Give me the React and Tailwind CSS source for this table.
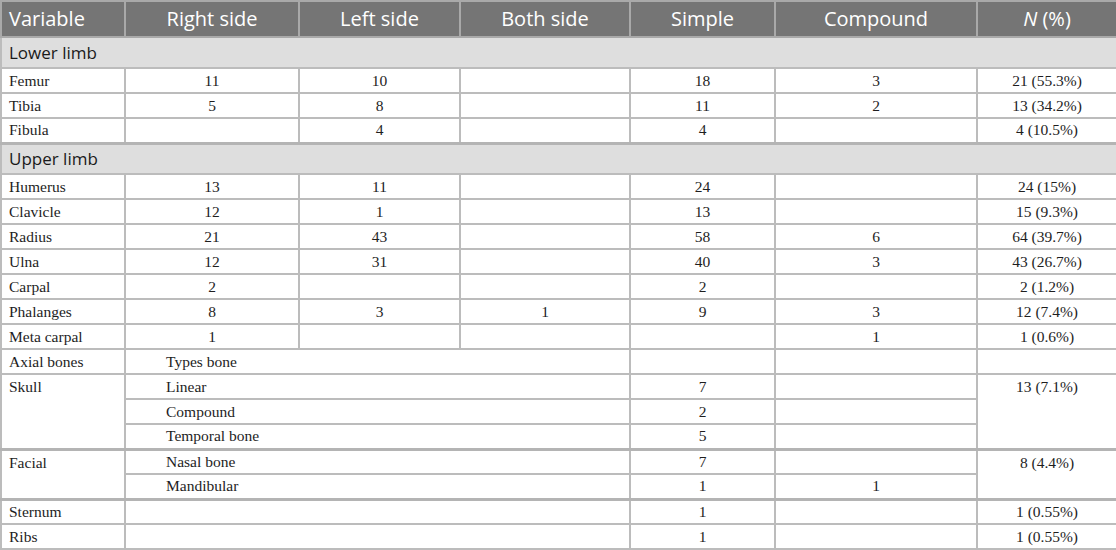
import React from "react";

const B = "border-2 border-[#bcbcbc]";
const td = `${B} h-[25px] p-0 text-center align-middle`;
const tdL = `${B} h-[25px] p-0 pl-[7px] text-left align-middle`;
const tdSpan = `${B} h-[25px] p-0 pl-[40px] text-left align-middle`;

function Row({ name, vals, topThick }) {
  return (
    <tr className={topThick ? "border-t-[3px] border-t-[#b4b4b4]" : ""}>
      <td className={tdL}>{name}</td>
      {vals.map((v, i) => (
        <td key={i} className={td}>{v}</td>
      ))}
    </tr>
  );
}

function Group({ label, thick }) {
  return (
    <tr className={thick ? "border-t-[3px] border-t-[#b4b4b4]" : ""}>
      <td
        colSpan={7}
        className={`${B} h-[31px] bg-[#dedede] pl-[7px] text-left text-[17px] leading-[22px] text-[#1a1a1a] font-['Open_Sans','Noto_Sans',sans-serif]`}
      >
        {label}
      </td>
    </tr>
  );
}

export default function App() {
  return (
    <div className="w-[1116px] h-[550px] bg-white overflow-hidden">
      <table className="w-[1116px] table-fixed border-collapse border-2 border-[#b4b4b4] font-['Liberation_Serif','Times_New_Roman',serif] text-[15.5px] leading-[18px] text-[#1e1e1e]">
        <colgroup>
          <col className="w-[124px]" />
          <col className="w-[174px]" />
          <col className="w-[161px]" />
          <col className="w-[170px]" />
          <col className="w-[145px]" />
          <col className="w-[202px]" />
          <col className="w-[140px]" />
        </colgroup>
        <thead>
          <tr className="bg-[#757575] text-white text-[20px] leading-[26px] font-['Open_Sans','Noto_Sans',sans-serif]">
            <th className="h-[36px] border-2 border-[#a9a9a9] pl-[7px] text-left font-normal">Variable</th>
            <th className="border-2 border-[#a9a9a9] font-normal">Right side</th>
            <th className="border-2 border-[#a9a9a9] font-normal">Left side</th>
            <th className="border-2 border-[#a9a9a9] font-normal">Both side</th>
            <th className="border-2 border-[#a9a9a9] font-normal">Simple</th>
            <th className="border-2 border-[#a9a9a9] font-normal">Compound</th>
            <th className="border-2 border-[#a9a9a9] font-normal">
              <span className="italic">N</span> (%)
            </th>
          </tr>
        </thead>
        <tbody>
          <Group label="Lower limb" />
          <Row name="Femur" vals={["11", "10", "", "18", "3", "21 (55.3%)"]} />
          <Row name="Tibia" vals={["5", "8", "", "11", "2", "13 (34.2%)"]} />
          <Row name="Fibula" vals={["", "4", "", "4", "", "4 (10.5%)"]} />
          <Group label="Upper limb" thick />
          <Row name="Humerus" vals={["13", "11", "", "24", "", "24 (15%)"]} />
          <Row name="Clavicle" vals={["12", "1", "", "13", "", "15 (9.3%)"]} />
          <Row name="Radius" vals={["21", "43", "", "58", "6", "64 (39.7%)"]} />
          <Row name="Ulna" vals={["12", "31", "", "40", "3", "43 (26.7%)"]} />
          <Row name="Carpal" vals={["2", "", "", "2", "", "2 (1.2%)"]} />
          <Row name="Phalanges" vals={["8", "3", "1", "9", "3", "12 (7.4%)"]} />
          <Row name="Meta carpal" vals={["1", "", "", "", "1", "1 (0.6%)"]} />
          <tr>
            <td className={tdL}>Axial bones</td>
            <td colSpan={3} className={tdSpan}>Types bone</td>
            <td className={td}></td>
            <td className={td}></td>
            <td className={td}></td>
          </tr>
          <tr>
            <td rowSpan={3} className={`${B} p-0 pl-[7px] pt-[3px] align-top text-left`}>Skull</td>
            <td colSpan={3} className={tdSpan}>Linear</td>
            <td className={td}>7</td>
            <td className={td}></td>
            <td rowSpan={3} className={`${B} p-0 pt-[3px] align-top text-center`}>13 (7.1%)</td>
          </tr>
          <tr>
            <td colSpan={3} className={tdSpan}>Compound</td>
            <td className={td}>2</td>
            <td className={td}></td>
          </tr>
          <tr>
            <td colSpan={3} className={tdSpan}>Temporal bone</td>
            <td className={td}>5</td>
            <td className={td}></td>
          </tr>
          <tr className="border-t-[3px] border-t-[#b4b4b4]">
            <td rowSpan={2} className={`${B} p-0 pl-[7px] pt-[3px] align-top text-left`}>Facial</td>
            <td colSpan={3} className={tdSpan}>Nasal bone</td>
            <td className={td}>7</td>
            <td className={td}></td>
            <td rowSpan={2} className={`${B} p-0 pt-[3px] align-top text-center`}>8 (4.4%)</td>
          </tr>
          <tr>
            <td colSpan={3} className={tdSpan}>Mandibular</td>
            <td className={td}>1</td>
            <td className={td}>1</td>
          </tr>
          <tr className="border-t-[3px] border-t-[#b4b4b4]">
            <td className={tdL}>Sternum</td>
            <td colSpan={3} className={tdSpan}></td>
            <td className={td}>1</td>
            <td className={td}></td>
            <td className={td}>1 (0.55%)</td>
          </tr>
          <tr>
            <td className={tdL}>Ribs</td>
            <td colSpan={3} className={tdSpan}></td>
            <td className={td}>1</td>
            <td className={td}></td>
            <td className={td}>1 (0.55%)</td>
          </tr>
        </tbody>
      </table>
    </div>
  );
}
